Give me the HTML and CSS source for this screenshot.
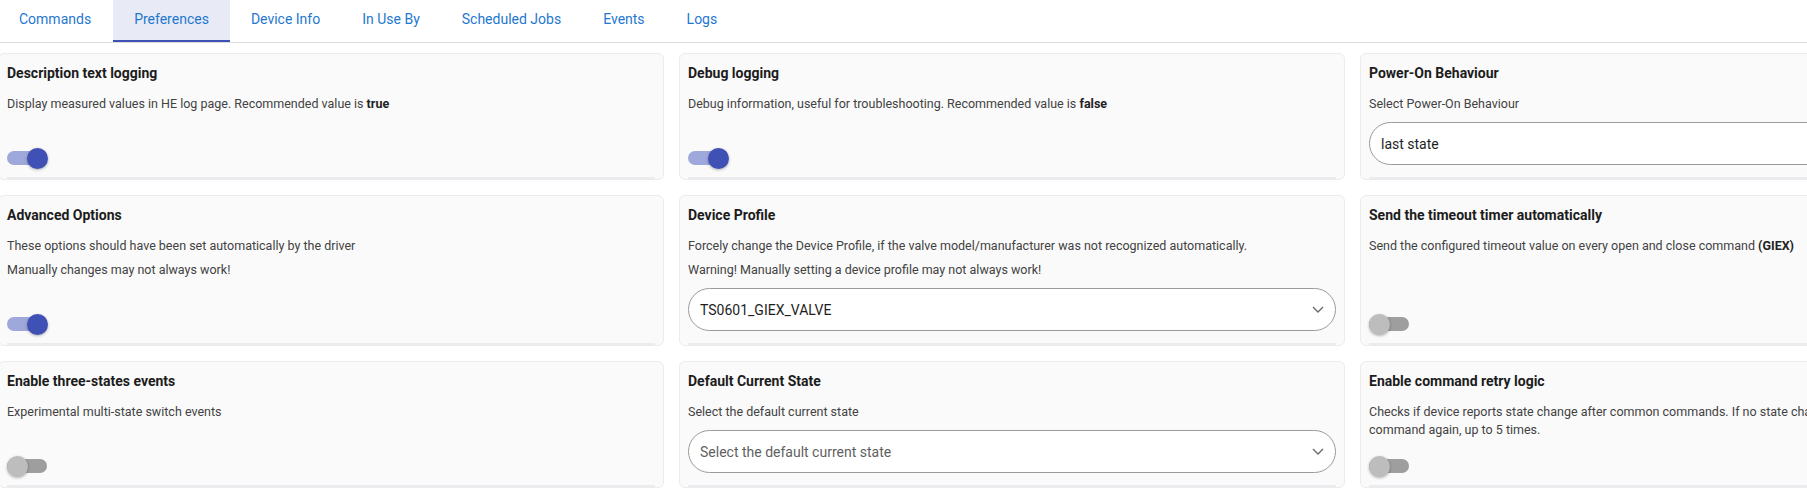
FILE: index.html
```html
<!DOCTYPE html>
<html lang="en">
<head>
<meta charset="utf-8">
<title>Preferences</title>
<link rel="stylesheet" href="styles.css">
</head>
<body>
<nav class="tabs">
  <a class="tab">Commands</a>
  <a class="tab active">Preferences</a>
  <a class="tab">Device Info</a>
  <a class="tab">In Use By</a>
  <a class="tab">Scheduled Jobs</a>
  <a class="tab">Events</a>
  <a class="tab">Logs</a>
</nav>
<main class="grid">
  <section class="card">
    <h3 class="title">Description text logging</h3>
    <div class="desc"><p>Display measured values in HE log page. Recommended value is <b>true</b></p></div>
    <div class="toggle on"><span class="track"></span><span class="thumb"></span></div>
    <div class="rule"></div>
  </section>
  <section class="card">
    <h3 class="title">Debug logging</h3>
    <div class="desc"><p>Debug information, useful for troubleshooting. Recommended value is <b>false</b></p></div>
    <div class="toggle on"><span class="track"></span><span class="thumb"></span></div>
    <div class="rule"></div>
  </section>
  <section class="card">
    <h3 class="title">Power-On Behaviour</h3>
    <div class="desc"><p>Select Power-On Behaviour</p></div>
    <div class="select"><span class="value">last state</span><svg class="chev" width="12" height="7" viewBox="0 0 12 7"><polyline points="1,1 6,6 11,1" fill="none" stroke="#666" stroke-width="1.3"/></svg></div>
    <div class="rule"></div>
  </section>

  <section class="card">
    <h3 class="title">Advanced Options</h3>
    <div class="desc"><p>These options should have been set automatically by the driver</p><p>Manually changes may not always work!</p></div>
    <div class="toggle on"><span class="track"></span><span class="thumb"></span></div>
    <div class="rule"></div>
  </section>
  <section class="card">
    <h3 class="title">Device Profile</h3>
    <div class="desc"><p>Forcely change the Device Profile, if the valve model/manufacturer was not recognized automatically.</p><p>Warning! Manually setting a device profile may not always work!</p></div>
    <div class="select"><span class="value">TS0601_GIEX_VALVE</span><svg class="chev" width="12" height="7" viewBox="0 0 12 7"><polyline points="1,1 6,6 11,1" fill="none" stroke="#666" stroke-width="1.3"/></svg></div>
    <div class="rule"></div>
  </section>
  <section class="card">
    <h3 class="title">Send the timeout timer automatically</h3>
    <div class="desc"><p>Send the configured timeout value on every open and close command <b>(GIEX)</b></p></div>
    <div class="toggle"><span class="track"></span><span class="thumb"></span></div>
    <div class="rule"></div>
  </section>

  <section class="card">
    <h3 class="title">Enable three-states events</h3>
    <div class="desc"><p>Experimental multi-state switch events</p></div>
    <div class="toggle"><span class="track"></span><span class="thumb"></span></div>
    <div class="rule"></div>
  </section>
  <section class="card">
    <h3 class="title">Default Current State</h3>
    <div class="desc"><p>Select the default current state</p></div>
    <div class="select"><span class="value placeholder">Select the default current state</span><svg class="chev" width="12" height="7" viewBox="0 0 12 7"><polyline points="1,1 6,6 11,1" fill="none" stroke="#666" stroke-width="1.3"/></svg></div>
    <div class="rule"></div>
  </section>
  <section class="card">
    <h3 class="title">Enable command retry logic</h3>
    <div class="desc"><p class="wrap">Checks if device reports state change after common commands. If no state change is detected, sends the<br>command again, up to 5 times.</p></div>
    <div class="toggle"><span class="track"></span><span class="thumb"></span></div>
    <div class="rule"></div>
  </section>
</main>
</body>
</html>
```

FILE: styles.css
```css
html, body {
  margin: 0;
  padding: 0;
  background: #ffffff;
  overflow: hidden;
}
body {
  font-family: Roboto, "Noto Sans", "Liberation Sans", sans-serif;
  color: #212121;
  width: 2100px;
}
.tabs {
  display: flex;
  height: 42px;
  border-bottom: 1px solid #dcdcdc;
}
.tab {
  display: flex;
  align-items: center;
  padding: 0 21px 2px;
  font-size: 14px;
  color: #1f78cf;
  box-sizing: border-box;
  height: 42px;
  border-bottom: 2px solid transparent;
}
.tab:first-child {
  padding-left: 19px;
  padding-right: 22px;
}
.tab.active {
  background: #e8eaf6;
  border-bottom-color: #3f51b5;
}
.grid {
  display: grid;
  grid-template-columns: repeat(3, 666px);
  column-gap: 15px;
  row-gap: 15px;
  margin: 10px 0 0 -2px;
}
.card {
  display: flex;
  flex-direction: column;
  background: #fafafa;
  border: 1px solid #ececec;
  border-radius: 6px;
  padding: 9px 8px 0;
}
.title {
  margin: 0;
  font-size: 14px;
  font-weight: 700;
  line-height: 20px;
  color: #1c1c1c;
}
.desc {
  margin: 12px 0 9px;
  font-size: 12.5px;
  line-height: 18px;
  color: #424242;
}
.desc p {
  margin: 0 0 6px;
}
.desc p:last-child {
  margin-bottom: 0;
}
.desc p.wrap {
  line-height: 17.5px;
}
.desc b {
  color: #222;
  font-weight: 700;
}
.toggle {
  position: relative;
  margin-top: auto;
  margin-bottom: 7px;
  width: 42px;
  height: 24px;
  flex: none;
}
.track {
  position: absolute;
  left: 0;
  top: 5px;
  width: 40px;
  height: 14px;
  border-radius: 7px;
  background: #9e9e9e;
}
.thumb {
  position: absolute;
  left: 0;
  top: 1.5px;
  width: 21px;
  height: 21px;
  border-radius: 50%;
  background: #bdbdbd;
  box-shadow: 0 1px 3px rgba(0, 0, 0, 0.3);
}
.toggle.on .track {
  background: #9fa8da;
}
.toggle.on .thumb {
  left: 20px;
  background: #3f51b5;
}
.select {
  margin-top: auto;
  margin-bottom: 12px;
  height: 43px;
  box-sizing: border-box;
  border: 1px solid #9a9a9a;
  border-radius: 22px;
  background: #ffffff;
  display: flex;
  align-items: center;
  justify-content: space-between;
  padding: 0 11px;
  flex: none;
}
.value {
  font-size: 14px;
  color: #1e1e1e;
}
.value.placeholder {
  color: #5f5f5f;
}
.chev {
  display: block;
}
.rule {
  height: 2px;
  background: #ebebf0;
  flex: none;
}
```
